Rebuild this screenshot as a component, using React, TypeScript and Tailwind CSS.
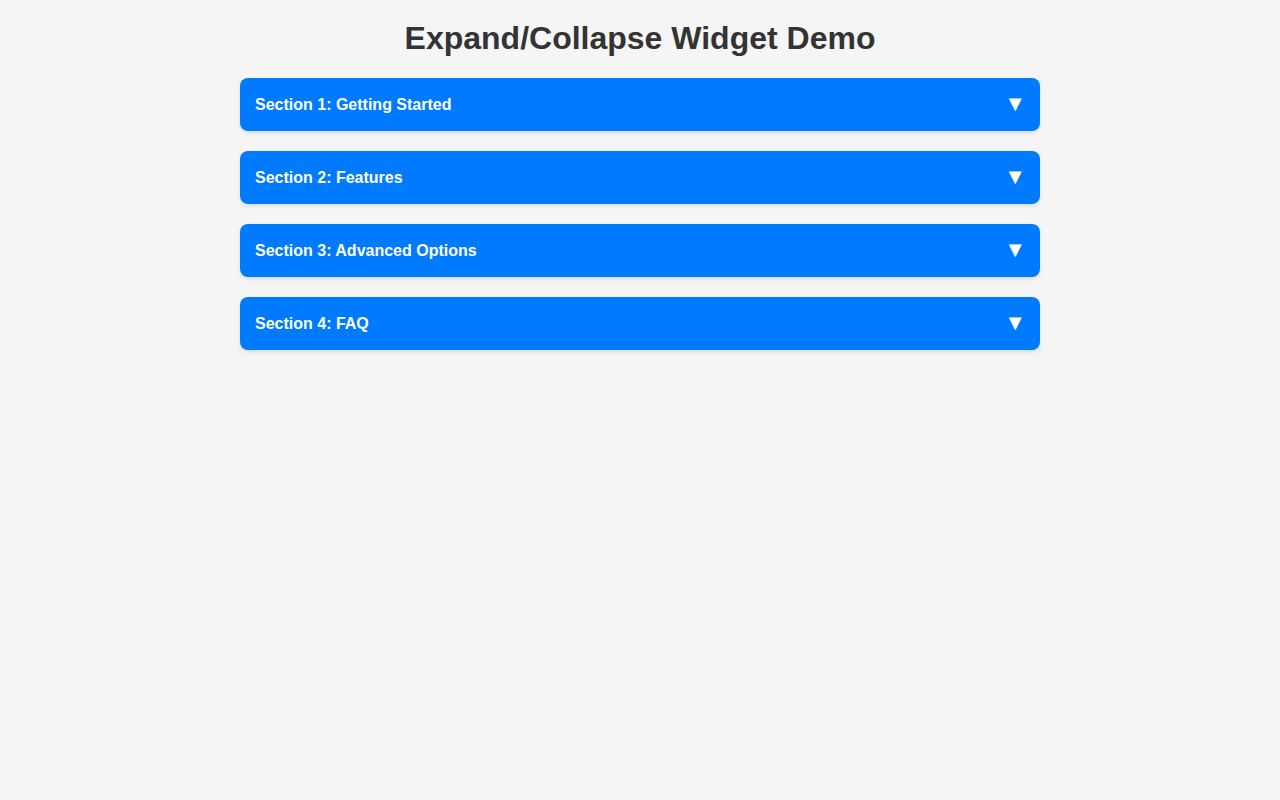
import React from "react";

const sections = [
  "Section 1: Getting Started",
  "Section 2: Features",
  "Section 3: Advanced Options",
  "Section 4: FAQ",
];

export default function App() {
  return (
    <div className="min-h-screen bg-[#f5f5f5] pt-5 px-5" style={{ fontFamily: '"Liberation Sans", Arial, sans-serif' }}>
      <h1 className="text-center text-[32px] font-bold leading-[37px] text-[#333] mb-[21px]">
        Expand/Collapse Widget Demo
      </h1>
      <div className="mx-auto w-[800px] flex flex-col gap-5">
        {sections.map((s) => (
          <button
            key={s}
            className="w-full h-[53px] flex items-center justify-between bg-[#007bff] text-white rounded-lg pl-[15px] pr-[14px] shadow-[0_2px_4px_rgba(0,0,0,0.1)] text-left"
          >
            <span className="text-[16px] font-bold leading-[18px]">{s}</span>
            <span className="text-[22px] leading-[20px] -mt-[2px]">▼</span>
          </button>
        ))}
      </div>
    </div>
  );
}
